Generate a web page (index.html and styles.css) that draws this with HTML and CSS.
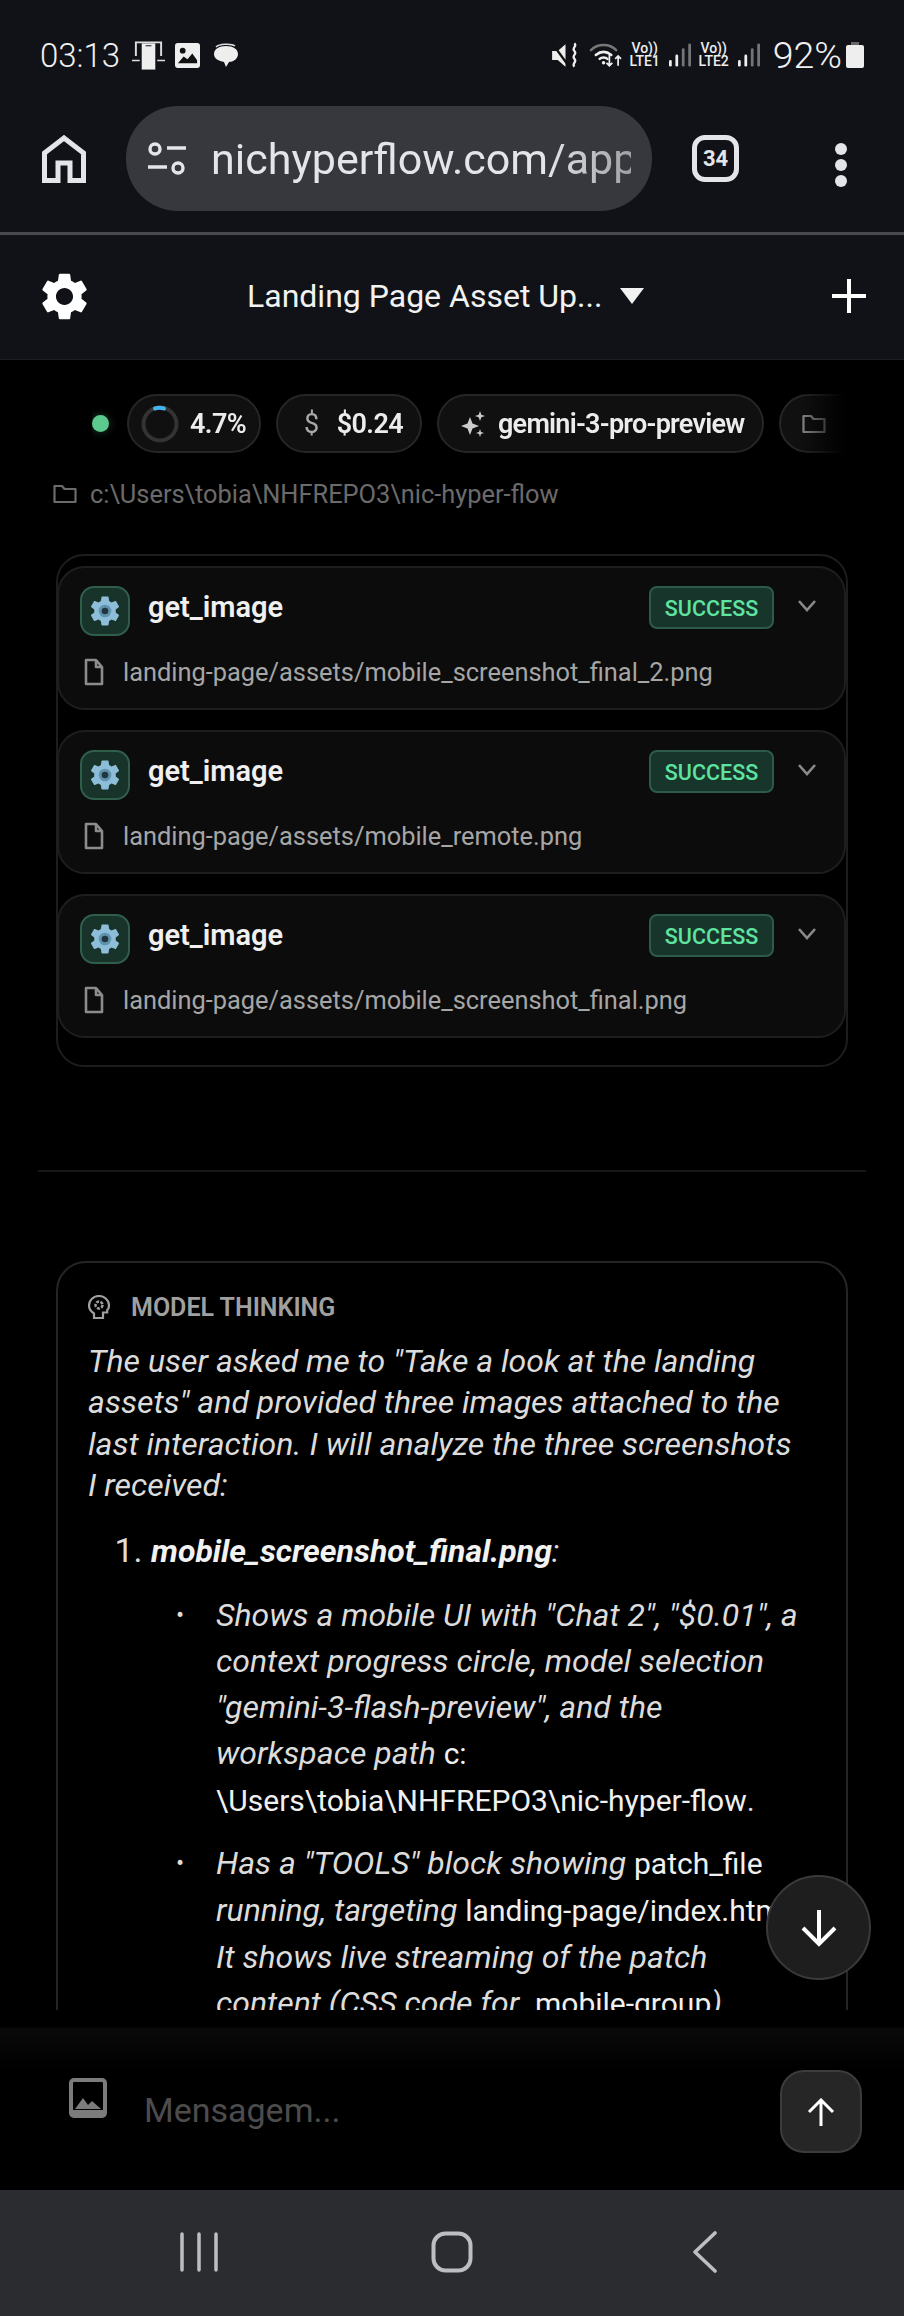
FILE: index.html
```html
<!DOCTYPE html>
<html lang="pt">
<head>
<meta charset="utf-8">
<title>Landing Page Asset Up...</title>
<link rel="stylesheet" href="styles.css">
</head>
<body>
<svg class="defs" width="0" height="0">
  <defs>
    <symbol id="gear" viewBox="0 0 24 24"><path fill="currentColor" d="M19.14 12.94c.04-.3.06-.61.06-.94 0-.32-.02-.64-.07-.94l2.03-1.58c.18-.14.23-.41.12-.61l-1.92-3.32c-.12-.22-.37-.29-.59-.22l-2.39.96c-.5-.38-1.03-.7-1.62-.94l-.36-2.54c-.04-.24-.24-.41-.48-.41h-3.84c-.24 0-.43.17-.47.41l-.36 2.54c-.59.24-1.13.57-1.62.94l-2.39-.96c-.22-.08-.47 0-.59.22L2.74 8.87c-.12.21-.08.47.12.61l2.03 1.58c-.05.3-.09.63-.09.94s.02.64.07.94l-2.03 1.58c-.18.14-.23.41-.12.61l1.92 3.32c.12.22.37.29.59.22l2.39-.96c.5.38 1.03.7 1.62.94l.36 2.54c.05.24.24.41.48.41h3.84c.24 0 .44-.17.47-.41l.36-2.54c.59-.24 1.13-.56 1.62-.94l2.39.96c.22.08.47 0 .59-.22l1.92-3.32c.12-.22.07-.47-.12-.61l-2.01-1.58zM12 15.6c-1.98 0-3.6-1.62-3.6-3.6s1.62-3.6 3.6-3.6 3.6 1.62 3.6 3.6-1.62 3.6-3.6 3.6z"/></symbol>
    <symbol id="toolgear" viewBox="0 0 24 24"><path fill="#8dbdd8" d="M19.14 12.94c.04-.3.06-.61.06-.94 0-.32-.02-.64-.07-.94l2.03-1.58c.18-.14.23-.41.12-.61l-1.92-3.32c-.12-.22-.37-.29-.59-.22l-2.39.96c-.5-.38-1.03-.7-1.62-.94l-.36-2.54c-.04-.24-.24-.41-.48-.41h-3.84c-.24 0-.43.17-.47.41l-.36 2.54c-.59.24-1.13.57-1.62.94l-2.39-.96c-.22-.08-.47 0-.59.22L2.74 8.87c-.12.21-.08.47.12.61l2.03 1.58c-.05.3-.09.63-.09.94s.02.64.07.94l-2.03 1.58c-.18.14-.23.41-.12.61l1.92 3.32c.12.22.37.29.59.22l2.39-.96c.5.38 1.03.7 1.62.94l.36 2.54c.05.24.24.41.48.41h3.84c.24 0 .44-.17.47-.41l.36-2.54c.59-.24 1.13-.56 1.62-.94l2.39.96c.22.08.47 0 .59-.22l1.92-3.32c.12-.22.07-.47-.12-.61l-2.01-1.58z"/><circle cx="12" cy="12" r="4.2" fill="#5f93ad"/><circle cx="12" cy="12" r="2.2" fill="#22353f"/></symbol>
    <symbol id="file" viewBox="0 0 20 28"><path fill="none" stroke="currentColor" stroke-width="2.6" stroke-linejoin="round" d="M2 2h10l6 7v17H2zM12 2v7h6"/></symbol>
    <symbol id="folder" viewBox="0 0 24 20"><path fill="none" stroke="currentColor" stroke-width="2.2" stroke-linejoin="round" d="M1.5 2h7.5l2.5 3h11v13h-21z"/></symbol>
    <symbol id="bars" viewBox="0 0 24 26"><g fill="currentColor"><rect x="0" y="18" width="3" height="7" rx="1.5"/><rect x="7" y="12" width="3" height="13" rx="1.5"/><rect x="14" y="5" width="3" height="20" rx="1.5" opacity=".45"/><rect x="21" y="0" width="3" height="25" rx="1.5" opacity=".45"/></g></symbol>
  </defs>
</svg>

<header class="chrome">
  <div class="status">
    <div class="status-left">
      <span class="clock">03:13</span>
      <svg class="st-ic st-phone" viewBox="0 0 34 30"><path fill="none" stroke="#ddd" stroke-width="2" d="M4 16V2h26v14"/><path fill="#eee" d="M10 3h14v27H10z"/><path fill="#111" d="M14 5h6v1h-6z"/><path fill="#ddd" d="M0 20h8v1.5H0zM26 20h8v1.5h-8z"/></svg>
      <svg class="st-ic st-pic" viewBox="0 0 26 26"><rect width="26" height="26" rx="3" fill="#eee"/><path fill="#111" d="M3 21l6-7 4 3 5-6 5 7v3H3z"/><circle cx="8" cy="8" r="3" fill="#111"/></svg>
      <svg class="st-ic st-chat" viewBox="0 0 26 26"><path fill="#eee" d="M13 4c7 0 12 3 12 8s-5 8-9 8l-3 5-2-5c-5-1-10-3-10-8s5-8 12-8z"/><path fill="none" stroke="#ddd" stroke-width="1.5" d="M3 5c3-3 15-4 19-1"/></svg>
    </div>
    <div class="status-right">
      <svg class="st-mute" viewBox="0 0 26 24"><path fill="#eee" d="M1 8h5l7-6v20l-7-6H1z"/><path stroke="#111" stroke-width="2" d="M1 1l16 22"/><path fill="none" stroke="#eee" stroke-width="2" d="M21 1c3 3-3 4 0 7s-3 4 0 7-3 4 0 7"/></svg>
      <svg class="st-wifi" viewBox="0 0 34 26"><g fill="none" stroke-linecap="round"><path stroke="#777" stroke-width="2.6" d="M2 8c7-7 19-7 26 0"/><path stroke="#eee" stroke-width="2.6" d="M7 13c5-4 11-4 16 0M11 17c2-2 6-2 8 0"/></g><circle cx="15" cy="21" r="1.8" fill="#eee"/><path stroke="#eee" stroke-width="1.8" fill="none" d="M21 13v11m-3-3l3 3 3-3M30 24V14m-3 3l3-3 3 3"/></svg>
      <span class="lte"><span>Vo))</span><span>LTE1</span></span>
      <svg class="st-bars"><use href="#bars"/></svg>
      <span class="lte"><span>Vo))</span><span>LTE2</span></span>
      <svg class="st-bars"><use href="#bars"/></svg>
      <span class="battery-text">92%</span>
      <svg class="st-batt" viewBox="0 0 18 26"><path fill="#666" d="M5 0h8v3H5z"/><rect y="3" width="18" height="23" rx="2" fill="#eee"/></svg>
    </div>
  </div>
  <div class="toolbar">
    <svg class="home" viewBox="0 0 44 48"><path fill="none" stroke="#e4e5e9" stroke-width="5" d="M2.500 45.500V18L22 3l19.500 15v27.500H28V28H16v17.500z"/></svg>
    <div class="urlbar">
      <svg class="tune" viewBox="0 0 38 34"><g fill="none" stroke="#e4e5e9" stroke-width="3.400"><circle cx="7" cy="7" r="5"/><circle cx="30" cy="26" r="5"/><path d="M19 6h19M0 25h19"/></g></svg>
      <span class="url">nichyperflow.com/app</span>
    </div>
    <div class="tabs">34</div>
    <div class="dots"><i></i><i></i><i></i></div>
  </div>
  <div class="chrome-line"></div>
  <div class="apphead">
    <svg class="head-gear"><use href="#gear"/></svg>
    <div class="head-title"><span>Landing Page Asset Up...</span><b class="caret"></b></div>
    <svg class="head-plus" viewBox="0 0 34 34"><path stroke="#fff" stroke-width="4" d="M17 0v34M0 17h34"/></svg>
  </div>
</header>

<main class="main">
  <div class="chips">
    <i class="live"></i>
    <div class="chip chip-ctx">
      <svg class="ring" viewBox="0 0 38 38"><circle cx="19" cy="19" r="16.500" fill="none" stroke="#333" stroke-width="4"/><path d="M14 3.500a16.500 16.500 0 0 1 9 0" fill="none" stroke="#45b4ee" stroke-width="4" stroke-linecap="round"/></svg>
      <span>4.7%</span>
    </div>
    <div class="chip chip-cost"><span class="dollar">$</span><span>$0.24</span></div>
    <div class="chip chip-model">
      <svg class="spark" viewBox="0 0 24 26"><path fill="#ccc" d="M9 6l2.500 6.500L18 15l-6.500 2.500L9 24l-2.500-6.500L0 15l6.500-2.500zM19 0l1.300 3.700L24 5l-3.700 1.300L19 10l-1.300-3.700L14 5l3.700-1.300zM19 18l1 3 3 1-3 1-1 3-1-3-3-1 3-1z"/></svg>
      <span>gemini-3-pro-preview</span>
    </div>
    <div class="chip chip-dir"><svg class="chip-folder"><use href="#folder"/></svg><span>nic-hyper-flow</span></div>
  </div>

  <div class="path"><svg class="path-folder"><use href="#folder"/></svg><span>c:\Users\tobia\NHFREPO3\nic-hyper-flow</span></div>

  <section class="tools">
    <article class="tool">
      <div class="tool-top">
        <span class="tool-icon"><svg><use href="#toolgear"/></svg></span>
        <span class="tool-name">get_image</span>
        <span class="badge">SUCCESS</span>
        <svg class="chev" viewBox="0 0 18 12"><path fill="none" stroke="#8a8a8a" stroke-width="2.600" d="M1 1l8 9 8-9"/></svg>
      </div>
      <div class="tool-file"><svg><use href="#file"/></svg><span>landing-page/assets/mobile_screenshot_final_2.png</span></div>
    </article>
    <article class="tool">
      <div class="tool-top">
        <span class="tool-icon"><svg><use href="#toolgear"/></svg></span>
        <span class="tool-name">get_image</span>
        <span class="badge">SUCCESS</span>
        <svg class="chev" viewBox="0 0 18 12"><path fill="none" stroke="#8a8a8a" stroke-width="2.600" d="M1 1l8 9 8-9"/></svg>
      </div>
      <div class="tool-file"><svg><use href="#file"/></svg><span>landing-page/assets/mobile_remote.png</span></div>
    </article>
    <article class="tool">
      <div class="tool-top">
        <span class="tool-icon"><svg><use href="#toolgear"/></svg></span>
        <span class="tool-name">get_image</span>
        <span class="badge">SUCCESS</span>
        <svg class="chev" viewBox="0 0 18 12"><path fill="none" stroke="#8a8a8a" stroke-width="2.600" d="M1 1l8 9 8-9"/></svg>
      </div>
      <div class="tool-file"><svg><use href="#file"/></svg><span>landing-page/assets/mobile_screenshot_final.png</span></div>
    </article>
  </section>

  <hr class="divider">

  <section class="thinking">
    <div class="think-head">
      <svg viewBox="0 0 22 24"><path fill="none" stroke="#a0a0a0" stroke-width="2.200" d="M6 23v-4.500C3 16.500 1 14 1 10.500 1 5 5.500 1 11 1s10 4 10 9.500c0 2-.8 3.600-1.800 4.500v2.500H15V23z"/><circle cx="11" cy="10" r="3.500" fill="none" stroke="#a0a0a0" stroke-width="2.500" stroke-dasharray="3 1.400"/></svg>
      <span>MODEL THINKING</span>
    </div>
    <p class="think-p">The user asked me to "Take a look at the landing assets" and provided three images attached to the last interaction. I will analyze the three screenshots I received:</p>
    <ol class="think-ol">
      <li><strong>mobile_screenshot_final.png</strong>:
        <ul>
          <li>Shows a mobile UI with "Chat 2", "$0.01", a context progress circle, model selection "gemini-3-flash-preview", and the workspace path <code>c:<br>\Users\tobia\NHFREPO3\nic-hyper-flow</code><span class="plain">.</span></li>
          <li>Has a "TOOLS" block showing <code>patch_file</code> running, targeting <span class="nowrap"><code>landing-page/index.html</code>.</span> It shows live streaming of the patch content (CSS code for <code>.mobile-group</code>)</li>
        </ul>
      </li>
    </ol>
  </section>

  <button class="fab" type="button" aria-label="Rolar para baixo"><svg viewBox="0 0 38 38"><path fill="none" stroke="#fff" stroke-width="4" d="M19 1v34M3 19l16 16 16-16"/></svg></button>
</main>

<footer class="composer">
  <svg class="attach" viewBox="0 0 38 40"><rect x="2" y="2" width="34" height="36" rx="3" fill="none" stroke="#7c7c7c" stroke-width="4"/><path fill="#7c7c7c" d="M6 31l8-11 5 7 4-4 9 8z"/><path fill="#7c7c7c" d="M4 32h30v6H4z"/></svg>
  <span class="placeholder">Mensagem...</span>
  <button class="send" type="button" aria-label="Enviar"><svg viewBox="0 0 28 28"><path fill="none" stroke="#fff" stroke-width="3" d="M14 28V2M2 14L14 2l12 12"/></svg></button>
</footer>

<nav class="navbar">
  <svg class="nav-recent" viewBox="0 0 38 40"><path stroke="#bdbec2" stroke-width="3.500" stroke-linecap="round" d="M2 2v36M19 2v36M36 2v36"/></svg>
  <svg class="nav-home" viewBox="0 0 42 42"><rect x="2.500" y="2.500" width="37" height="37" rx="12" fill="none" stroke="#bdbec2" stroke-width="4"/></svg>
  <svg class="nav-back" viewBox="0 0 26 42"><path fill="none" stroke="#bdbec2" stroke-width="3.600" stroke-linecap="round" stroke-linejoin="round" d="M23 2L3 21l20 19"/></svg>
</nav>
</body>
</html>
```
FILE: styles.css
```css
* { box-sizing: border-box; }
html, body { margin: 0; padding: 0; }
body {
  width: 904px;
  height: 2316px;
  overflow: hidden;
  background: #000;
  color: #e8e8e8;
  font-family: Roboto, "Noto Sans", sans-serif;
  display: flex;
  flex-direction: column;
}
.defs { position: absolute; }

.chrome { background: #111217; flex: none; }

.status {
  height: 106px;
  padding: 36px 40px 0 40px;
  display: flex;
  justify-content: space-between;
  align-items: flex-start;
}
.status-left, .status-right { display: flex; align-items: center; height: 38px; }
.clock { font-size: 33px; font-weight: 300; color: #f0f0f0; width: 92px; }
.st-ic { display: block; flex: none; }
.st-phone { width: 33px; height: 30px; }
.st-pic { width: 25px; height: 25px; margin-left: 10px; }
.st-chat { width: 26px; height: 26px; margin-left: 13px; }
.st-mute { width: 29px; height: 27px; margin-right: 9px; flex: none; }
.st-wifi { width: 33px; height: 26px; flex: none; }
.lte {
  display: flex;
  flex-direction: column;
  align-items: center;
  font-size: 14px;
  line-height: 13px;
  font-weight: 500;
  color: #eee;
  width: 32px;
  margin-left: 7px;
}
.st-bars { width: 22px; height: 25px; margin-left: 8px; color: #eee; flex: none; }
.battery-text { font-size: 37.500px; font-weight: 300; color: #f0f0f0; margin-left: 13px; }
.st-batt { width: 18px; height: 26px; margin-left: 4px; flex: none; }

.toolbar {
  height: 126px;
  padding-left: 42px;
  display: flex;
  align-items: flex-start;
}
.home { width: 44px; height: 48px; margin-top: 29px; flex: none; }
.urlbar {
  flex: none;
  width: 526px;
  height: 105px;
  margin-left: 40px;
  border-radius: 52px;
  background: #37383d;
  display: flex;
  align-items: center;
  padding: 0 21px 0 22px;
  overflow: hidden;
}
.tune { width: 38px; height: 34px; flex: none; margin-right: 25px; }
.url {
  flex: 1;
  min-width: 0;
  font-size: 43px;
  line-height: 60px;
  white-space: nowrap;
  overflow: hidden;
  color: #e4e5e9;
  -webkit-mask-image: linear-gradient(90deg, #000 80%, rgba(0,0,0,.6) 100%);
  mask-image: linear-gradient(90deg, #000 80%, rgba(0,0,0,.6) 100%);
}
.tabs {
  flex: none;
  width: 47px;
  height: 47px;
  margin: 29px 0 0 40px;
  border: 5px solid #e4e5e9;
  border-radius: 13px;
  font-size: 22px;
  font-weight: 700;
  color: #e4e5e9;
  display: flex;
  align-items: center;
  justify-content: center;
}
.dots {
  margin: 37px 0 0 96px;
  display: flex;
  flex-direction: column;
  gap: 4px;
}
.dots i { display: block; width: 12px; height: 12px; border-radius: 50%; background: #e4e5e9; }
.chrome-line { height: 3px; background: #48494d; }

.apphead {
  height: 125px;
  padding: 0 38px 2px 36px;
  display: flex;
  align-items: center;
  border-bottom: 1px solid #1c1d21;
}
.head-gear { width: 57px; height: 57px; color: #fff; flex: none; }
.head-title { display: flex; align-items: center; gap: 18px; margin-left: 154px; color: #f2f2f2; font-size: 32px; flex: 1; }
.caret {
  width: 0;
  height: 0;
  border-left: 12px solid transparent;
  border-right: 12px solid transparent;
  border-top: 16px solid #f2f2f2;
}
.head-plus { width: 34px; height: 34px; flex: none; }

.main { flex: 1; min-height: 0; overflow: hidden; position: relative; background: #000; }

.chips {
  margin: 34px 59px 0 92px;
  height: 59px;
  display: flex;
  align-items: center;
  gap: 15px;
  overflow: hidden;
  -webkit-mask-image: linear-gradient(90deg, #000 94%, transparent 100%);
  mask-image: linear-gradient(90deg, #000 94%, transparent 100%);
}
.live {
  flex: none;
  width: 17px;
  height: 17px;
  margin-right: 3px;
  border-radius: 50%;
  background: #5cc98e;
  box-shadow: 0 0 8px rgba(92,201,142,.35);
}
.chip {
  flex: none;
  height: 59px;
  border: 2px solid #262626;
  border-radius: 30px;
  background: #101010;
  display: flex;
  align-items: center;
  font-size: 27px;
  letter-spacing: -.55px;
  font-weight: 600;
  color: #ececec;
  white-space: nowrap;
}
.chip-ctx { padding: 0 0 0 12px; gap: 11px; width: 134px; }
.ring { width: 38px; height: 38px; flex: none; }
.chip-cost { width: 146px; padding: 0 0 0 26px; gap: 18px; }
.dollar { color: #a8a8a8; font-weight: 400; }
.chip-model { width: 327px; padding: 0 0 0 22px; gap: 13px; letter-spacing: -.75px; }
.spark { width: 24px; height: 26px; flex: none; }
.chip-dir { width: 220px; padding: 0 20px 0 21px; gap: 18px; color: #555; }
.chip-folder { width: 24px; height: 20px; color: #8a8a8a; flex: none; }

.path {
  margin: 31px 0 0 53px;
  height: 20px;
  display: flex;
  align-items: center;
  gap: 13px;
  font-size: 25.4px;
  color: #6b6b6b;
}
.path-folder { width: 24px; height: 20px; color: #6b6b6b; flex: none; }

.tools {
  margin: 50px 56px 0 56px;
  height: 513px;
  padding-top: 10px;
  border: 2px solid #1d1d1d;
  border-radius: 28px;
  display: flex;
  flex-direction: column;
  gap: 20px;
}
.tool {
  height: 144px;
  margin: 0 0 0 -1px;
  border: 2px solid #1e1e1e;
  border-radius: 28px;
  background: #0c0c0c;
  padding: 18px 28px 0 21px;
}
.tool-top { display: flex; align-items: flex-start; }
.tool-icon {
  flex: none;
  width: 50px;
  height: 50px;
  border: 2px solid #2f5e4b;
  border-radius: 14px;
  background: #18332a;
  display: flex;
  align-items: center;
  justify-content: center;
}
.tool-icon svg { width: 36px; height: 36px; }
.tool-name {
  flex: 1;
  margin-left: 18px;
  font-size: 29px;
  line-height: 42px;
  font-weight: 600;
  color: #f0f0f0;
}
.badge {
  flex: none;
  width: 125px;
  height: 43px;
  padding-top: 2px;
  border: 2px solid #2c5c49;
  border-radius: 8px;
  background: #17352a;
  color: #5fe3a1;
  font-size: 21.500px;
  font-weight: 500;
  display: flex;
  align-items: center;
  justify-content: center;
}
.chev { flex: none; width: 18px; height: 12px; margin: 14px 0 0 24px; }
.tool-file {
  margin: 21px 0 0 4px;
  display: flex;
  align-items: center;
  gap: 19px;
  font-size: 25.4px;
  line-height: 30px;
  color: #a6a6a6;
  white-space: nowrap;
}
.tool-file svg { width: 20px; height: 28px; color: #8c8c8c; flex: none; }

.divider {
  height: 2px;
  margin: 103px 38px 0;
  border: 0;
  background: #171717;
}

.thinking {
  margin: 89px 56px 0;
  padding: 31px 37px 0 30px;
  border: 2px solid #252525;
  border-radius: 30px;
  height: 900px;
}
.think-head {
  display: flex;
  align-items: center;
  gap: 21px;
  height: 26px;
  font-size: 25px;
  font-weight: 600;
  color: #a0a0a0;
}
.think-head svg { width: 22px; height: 24px; flex: none; }
.think-p {
  margin: 20.500px 0 0;
  padding-right: 10px;
  font-size: 32px;
  line-height: 41.5px;
  font-style: italic;
  color: #dcdcdc;
}
.think-ol {
  margin: 20.500px 0 0;
  padding: 0 0 0 63px;
  font-size: 32px;
  line-height: 46px;
  font-style: italic;
  color: #dcdcdc;
}
.think-ol > li::marker { font-style: normal; font-size: 34px; }
.think-ol strong { font-weight: 700; color: #f2f2f2; }
.think-ol ul { margin: 18px 0 0; padding: 0 0 0 65px; list-style: none; }
.think-ol ul li { margin-bottom: 16px; }
.think-ol ul li::before {
  content: "•";
  display: inline-block;
  width: 40px;
  margin-left: -40px;
  font-style: normal;
  font-size: 24px;
  vertical-align: 3px;
}
.think-ol code { font-family: Roboto, sans-serif; font-size: 30px; font-style: normal; color: #f0f0f0; }
.plain { font-style: normal; font-size: 30px; }
.nowrap { white-space: nowrap; }

.fab {
  position: absolute;
  left: 766px;
  top: 1515px;
  width: 105px;
  height: 105px;
  border-radius: 50%;
  border: 2px solid #3a3a3a;
  background: #1e1e1e;
  padding: 0;
  display: flex;
  align-items: center;
  justify-content: center;
}
.fab svg { width: 38px; height: 38px; }

.composer {
  flex: none;
  height: 180px;
  padding: 60px 42px 0 69px;
  display: flex;
  align-items: flex-start;
  background: linear-gradient(180deg, #000 0, #000 17px, #0a0a0a 18px, #000 60px);
}
.attach { width: 38px; height: 40px; margin-top: 8px; flex: none; }
.placeholder { flex: 1; margin: 18px 0 0 37px; font-size: 34px; line-height: 44px; color: #4c4c4c; }
.send {
  flex: none;
  width: 82px;
  height: 83px;
  border-radius: 24px;
  border: 2px solid #3c3c3c;
  background: #262626;
  padding: 0;
  display: flex;
  align-items: center;
  justify-content: center;
}
.send svg { width: 28px; height: 28px; }

.navbar {
  flex: none;
  height: 126px;
  background: #2a2c30;
  display: flex;
  align-items: center;
  padding: 0 0 3px 180px;
}
.nav-recent { width: 38px; height: 40px; flex: none; }
.nav-home { width: 42px; height: 42px; margin-left: 213px; flex: none; }
.nav-back { width: 26px; height: 42px; margin-left: 219px; flex: none; }
```
